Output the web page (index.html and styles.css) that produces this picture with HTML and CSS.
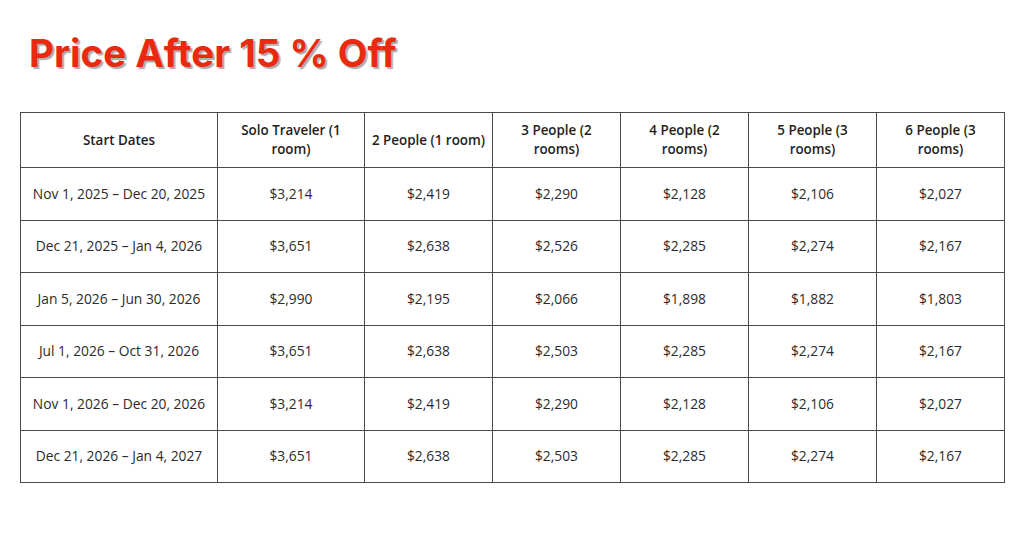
FILE: index.html
```html
<!DOCTYPE html>
<html>
<head>
<meta charset="utf-8">
<link rel="stylesheet" href="styles.css">
</head>
<body>
<div class="page">
  <h1 class="title">Price After 15 % Off</h1>
  <table class="prices">
    <colgroup>
      <col class="c-date"><col class="c-solo"><col class="c-two"><col class="c-n"><col class="c-n"><col class="c-n"><col class="c-n">
    </colgroup>
    <thead>
      <tr>
        <th>Start Dates</th>
        <th>Solo Traveler (1<br>room)</th>
        <th>2 People (1 room)</th>
        <th>3 People (2<br>rooms)</th>
        <th>4 People (2<br>rooms)</th>
        <th>5 People (3<br>rooms)</th>
        <th>6 People (3<br>rooms)</th>
      </tr>
    </thead>
    <tbody>
      <tr><td>Nov 1, 2025 – Dec 20, 2025</td><td>$3,214</td><td>$2,419</td><td>$2,290</td><td>$2,128</td><td>$2,106</td><td>$2,027</td></tr>
      <tr><td>Dec 21, 2025 – Jan 4, 2026</td><td>$3,651</td><td>$2,638</td><td>$2,526</td><td>$2,285</td><td>$2,274</td><td>$2,167</td></tr>
      <tr><td>Jan 5, 2026 – Jun 30, 2026</td><td>$2,990</td><td>$2,195</td><td>$2,066</td><td>$1,898</td><td>$1,882</td><td>$1,803</td></tr>
      <tr><td>Jul 1, 2026 – Oct 31, 2026</td><td>$3,651</td><td>$2,638</td><td>$2,503</td><td>$2,285</td><td>$2,274</td><td>$2,167</td></tr>
      <tr><td>Nov 1, 2026 – Dec 20, 2026</td><td>$3,214</td><td>$2,419</td><td>$2,290</td><td>$2,128</td><td>$2,106</td><td>$2,027</td></tr>
      <tr><td>Dec 21, 2026 – Jan 4, 2027</td><td>$3,651</td><td>$2,638</td><td>$2,503</td><td>$2,285</td><td>$2,274</td><td>$2,167</td></tr>
    </tbody>
  </table>
</div>
</body>
</html>
```
FILE: styles.css
```css
html, body {
  margin: 0;
  padding: 0;
  background: #ffffff;
}
.page {
  width: 1024px;
  height: 536px;
  padding: 0 20px;
  box-sizing: border-box;
}
.title {
  margin: 0;
  padding: 31px 0 0 9px;
  height: 112px;
  box-sizing: border-box;
  font-family: Inter, "Liberation Sans", sans-serif;
  font-weight: 700;
  font-size: 38.6px;
  line-height: 44px;
  color: #ea2a10;
  letter-spacing: 0;
  text-shadow: 2px 2px 1px rgba(90, 90, 90, 0.5);
}
.prices {
  border-collapse: collapse;
  width: 985px;
  table-layout: fixed;
  font-family: "Open Sans", "Liberation Sans", sans-serif;
  font-size: 13.8px;
  color: #2b2b2b;
}
.c-date { width: 197px; }
.c-solo { width: 147px; }
.c-two { width: 128px; }
.c-n { width: 128px; }
.prices th, .prices td {
  border: 1px solid #4a4a4a;
  text-align: center;
  vertical-align: middle;
  padding: 0 4px;
}
.prices th {
  height: 54px;
  font-weight: 600;
  font-size: 13.4px;
  line-height: 19px;
  color: #1e1e1e;
}
.prices td {
  height: 51.5px;
  line-height: 18px;
}
```
